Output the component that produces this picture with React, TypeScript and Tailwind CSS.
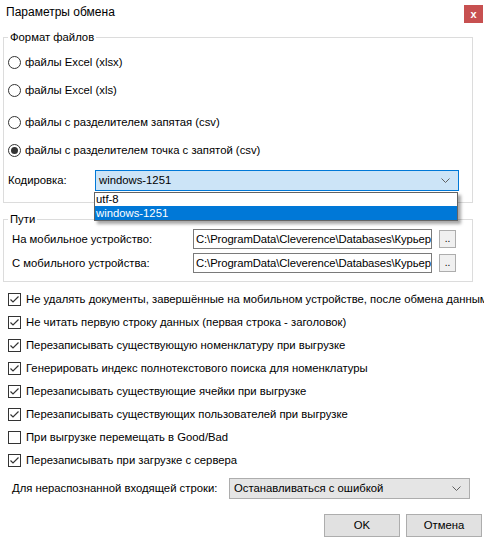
import { useState } from "react";

const font = "font-['Liberation_Sans',Arial,sans-serif]";

const formats = [
  { id: "xlsx", label: "файлы Excel (xlsx)", mb: "mb-[8px]" },
  { id: "xls", label: "файлы Excel (xls)", mb: "mb-[12px]" },
  { id: "csv", label: "файлы с разделителем запятая (csv)", mb: "mb-[8px]" },
  { id: "csv2", label: "файлы с разделителем точка с запятой (csv)", mb: "mb-[10px]" },
];

const options = [
  { label: "Не удалять документы, завершённые на мобильном устройстве, после обмена данными", checked: true },
  { label: "Не читать первую строку данных (первая строка - заголовок)", checked: true },
  { label: "Перезаписывать существующую номенклатуру при выгрузке", checked: true },
  { label: "Генерировать индекс полнотекстового поиска для номенклатуры", checked: true },
  { label: "Перезаписывать существующие ячейки при выгрузке", checked: true },
  { label: "Перезаписывать существующих пользователей при выгрузке", checked: true },
  { label: "При выгрузке перемещать в Good/Bad", checked: false },
  { label: "Перезаписывать при загрузке с сервера", checked: true },
];

function Chevron() {
  return (
    <svg width="9" height="5" viewBox="0 0 9 5" className="shrink-0">
      <polyline points="0.5,0.5 4.5,4.5 8.5,0.5" fill="none" stroke="#606060" strokeWidth="1" />
    </svg>
  );
}

function Radio({ checked }: { checked: boolean }) {
  return (
    <span className="w-[13px] h-[13px] rounded-full border border-[#333333] bg-white flex items-center justify-center shrink-0">
      {checked && <span className="w-[7px] h-[7px] rounded-full bg-[#333333]" />}
    </span>
  );
}

function Check({ checked }: { checked: boolean }) {
  return (
    <span className="w-[13px] h-[13px] border border-[#333333] bg-white flex items-center justify-center shrink-0">
      {checked && (
        <svg width="11" height="11" viewBox="0 0 11 11">
          <polyline points="1.5,5.5 4,8 9.5,2.5" fill="none" stroke="#333333" strokeWidth="1.2" />
        </svg>
      )}
    </span>
  );
}

export default function App() {
  const [format, setFormat] = useState("csv2");
  const [checks, setChecks] = useState(options.map((o) => o.checked));

  return (
    <div className={`w-[484px] h-[538px] bg-white text-[11.3px] leading-[15px] text-black overflow-hidden ${font}`}>
      <div className="h-[30px] flex items-start justify-between">
        <span className="pl-[6px] pt-[5px] text-[12px]">Параметры обмена</span>
        <button className="w-[19px] h-[18px] mt-[5px] mr-[1px] bg-[#c75050] text-white text-[11px] font-bold leading-[18px]">
          x
        </button>
      </div>

      <fieldset className="ml-[3px] w-[470px] h-[173px] border border-[#dcdcdc] relative">
        <legend className="ml-[4px] px-[2px] leading-[14px]">Формат файлов</legend>
        <div className="pl-[4px] pt-[8px] flex flex-col">
          {formats.map((f) => (
            <label
              key={f.id}
              className={`h-[20px] flex items-center gap-[4px] ${f.mb}`}
              onClick={() => setFormat(f.id)}
            >
              <Radio checked={format === f.id} />
              <span>{f.label}</span>
            </label>
          ))}
          <div className="h-[21px] flex items-center">
            <span className="w-[87px]">Кодировка:</span>
            <div className="w-[364px] h-[21px] border border-[#0078d7] bg-[#cce4f7] flex items-center justify-between pl-[3px] pr-[8px]">
              <span>windows-1251</span>
              <Chevron />
            </div>
          </div>
        </div>
        <div className="absolute left-[90px] top-[148px] w-[364px] border border-[#646464] bg-white shadow-[3px_3px_3px_rgba(0,0,0,0.35)] z-10">
          <div className="h-[13px] leading-[13px] pl-[1px]">utf-8</div>
          <div className="h-[14px] leading-[14px] pl-[1px] bg-[#0078d7] text-white">windows-1251</div>
        </div>
      </fieldset>

      <fieldset className="ml-[3px] mt-[9px] w-[470px] h-[70px] border border-[#dcdcdc]">
        <legend className="ml-[4px] px-[2px] leading-[14px]">Пути</legend>
        <div className="pl-[8px] pt-[3px] flex flex-col gap-[4px]">
          {["На мобильное устройство:", "С мобильного устройства:"].map((l) => (
            <div key={l} className="h-[20px] flex items-center">
              <span className="w-[181px]">{l}</span>
              <div className="w-[239px] h-[20px] border border-[#7a7a7a] flex items-center pl-[2px] overflow-hidden whitespace-nowrap tracking-[-0.1px]">
                C:\ProgramData\Cleverence\Databases\Курьер
              </div>
              <button className="ml-[7px] w-[17px] h-[18px] border border-[#adadad] bg-[#f0f0f0] text-[10px] leading-[10px] flex items-end justify-center pb-[3px] font-normal">
                ..
              </button>
            </div>
          ))}
        </div>
      </fieldset>

      <div className="pl-[8px] pt-[6px] flex flex-col">
        {options.map((o, i) => (
          <label
            key={o.label}
            className="h-[23px] flex items-center gap-[5px] whitespace-nowrap"
            onClick={() => setChecks(checks.map((c, j) => (j === i ? !c : c)))}
          >
            <Check checked={checks[i]} />
            <span>{o.label}</span>
          </label>
        ))}
      </div>

      <div className="mt-[6px] h-[21px] flex items-center">
        <span className="pl-[12px] w-[229px] whitespace-nowrap">Для нераспознанной входящей строки:</span>
        <div className="w-[241px] h-[21px] border border-[#adadad] bg-[#e5e5e5] flex items-center justify-between pl-[4px] pr-[8px]">
          <span>Останавливаться с ошибкой</span>
          <Chevron />
        </div>
      </div>

      <div className="mt-[15px] flex justify-end gap-[6px] pr-[2px]">
        <button className="w-[76px] h-[23px] border border-[#adadad] bg-[#e1e1e1] font-normal">OK</button>
        <button className="w-[76px] h-[23px] border border-[#adadad] bg-[#e1e1e1] font-normal">Отмена</button>
      </div>
    </div>
  );
}
